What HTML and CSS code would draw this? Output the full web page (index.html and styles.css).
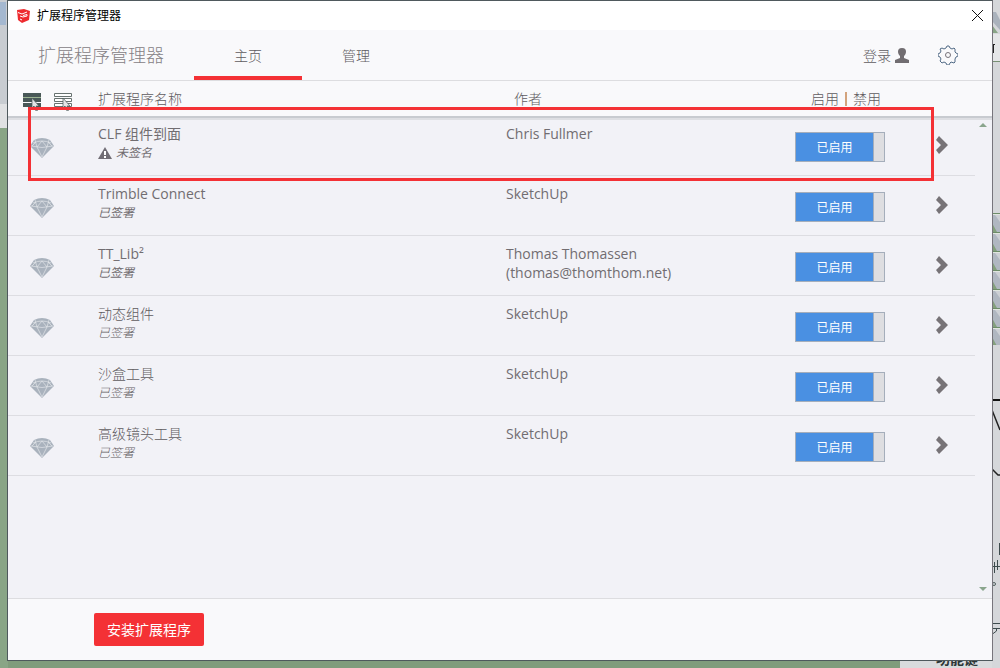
FILE: index.html
```html
<!DOCTYPE html>
<html lang="zh-CN">
<head>
  <meta charset="UTF-8">
  <meta name="viewport" content="width=device-width, initial-scale=1.0">
  <title>扩展程序管理器</title>
  <link rel="stylesheet" href="styles.css">
</head>
<body>

  <!-- Shared icons -->
  <svg class="icon-defs" aria-hidden="true">
    <symbol id="gem" viewBox="0 0 24 20">
      <path fill="#a9b2bd" d="M4 2 Q12 -2 20 2 L24 8 L12 20 L0 8 Z"/>
      <path fill="none" stroke="#e3e5ea" stroke-width=".7" d="M1 8 Q12 11 23 8 M5 2 L7 9 L12 19 L17 9 L19 2 M7 9 L12 3 L17 9 M3 5 Q12 1 21 5 M2 8 L6 4 M22 8 L18 4"/>
    </symbol>
    <symbol id="chevron" viewBox="0 0 13 18">
      <path fill="#777377" d="M1 4 L4 0 L13 9 L4 18 L1 14 L6 9 Z"/>
    </symbol>
  </svg>

  <!-- Desktop behind the window -->
  <svg class="desktop-left" width="8" height="668" aria-hidden="true">
    <path fill="#c8ccd1" d="M0 0h8v128h-8z"/>
    <path fill="#6f9ad0" d="M0 2h6v23h-6z" opacity=".4"/>
    <path fill="#e0e1e3" d="M0 104h7v24h-7z"/>
    <path fill="#89a586" d="M0 128h8v540h-8z"/>
  </svg>
  <svg class="desktop-right" width="8" height="668" aria-hidden="true">
    <defs>
      <pattern id="thumbs" width="8" height="19" y="213" patternUnits="userSpaceOnUse">
        <path fill="#b0b7c1" d="M0 0h8v19h-8z"/>
        <path fill="#cdd0d5" d="M3 2h5v7z"/>
        <path fill="#84a07d" d="M0 10l5 9h-5z"/>
        <path fill="#e0e5df" d="M0 1h8v1h-8z"/>
        <path fill="#6d8d69" d="M0 0h8v1h-8z"/>
      </pattern>
    </defs>
    <path fill="#d5d7da" d="M0 0h8v668h-8z"/>
    <path fill="#aab2bc" d="M0 12h4l4 8v10l-8-9z"/>
    <path fill="#89a586" d="M0 25l6 8h-6z"/>
    <path fill="#e5e6e8" d="M0 34h8v27h-8z"/>
    <path fill="#222" d="M0 44h3v1h-1v8h-1v-4h-1z"/>
    <path fill="#789074" d="M0 61h8v1h-8z"/>
    <path fill="url(#thumbs)" d="M0 213h8v132h-8z"/>
    <path fill="#111" d="M0 399h8v2h-8z"/>
    <path fill="none" stroke="#222" stroke-width="1.500" d="M0 410l8 20M0 469l6 6h2"/>
    <path fill="none" stroke="#3d4b4d" d="M7.500 543v12M2.500 562v11M5.500 560v10M1 566.500h7M0 623.500h8M0 628.500h8M4.500 628v3l-4 3"/>
    <circle cx="2" cy="584" r="1.500" fill="none" stroke="#526060"/>
  </svg>
  <div class="desktop-text" aria-hidden="true">功能键</div>

  <div class="window">
    <div class="titlebar">
      <svg class="app-icon" width="14" height="14" viewBox="0 0 14 14" aria-hidden="true">
        <path fill="#ee2b2f" d="M0 1L7 0l6 2-1 9-7 3-4-3z"/>
        <path fill="none" stroke="#fff" d="M1 3.500l4 1.500 5-2M3 7l3 1 4-1V5.500L6 6.500M3 10l2 1"/>
      </svg>
      <span>扩展程序管理器</span>
      <button class="close-btn" aria-label="关闭">
        <svg width="11" height="11" viewBox="0 0 11 11"><path fill="none" stroke="#111" d="M0 0l11 11M11 0L0 11"/></svg>
      </button>
    </div>

    <div class="navbar">
      <h1>扩展程序管理器</h1>
      <nav>
        <a href="#" class="active">主页</a>
        <a href="#">管理</a>
      </nav>
      <a href="#" class="login">登录
        <svg width="14" height="15" viewBox="0 0 14 15" aria-hidden="true"><path fill="#716d71" d="M7 0c6 0 4 7 2 8v2l5 2v3H0v-3l5-2V8C3 7 1 0 7 0z"/></svg>
      </a>
      <button class="settings" aria-label="设置">
        <svg width="20" height="20" viewBox="0 0 20 20">
          <path fill="none" stroke="#526b86" d="M8 3l1-2h2l1 2 2 1 2-1 1 1 0 3 1 1 2 1v2l-2 1-1 2 0 3-1 1-3-1-1 1-1 2H9l-1-2-2-1-2 1-2-2 1-2-1-2-2-1V9l2-1 1-2-1-2 2-1 2 1z"/>
          <circle cx="10" cy="10" r="2.500" fill="none" stroke="#77737a"/>
        </svg>
      </button>
    </div>

    <div class="list">
      <table>
        <colgroup>
          <col class="col-icon"><col class="col-name"><col><col class="col-toggle"><col class="col-more"><col class="col-gutter">
        </colgroup>
        <thead>
          <tr>
            <th class="select-cell">
              <button aria-label="全选">
                <svg width="20" height="18" viewBox="0 0 20 18">
                  <path fill="#495857" d="M0 0h18v4H0zM0 5h18v4H0zM0 10h18v4H0z"/>
                  <path fill="#9bb392" d="M0 4h18v1H0z"/>
                  <path fill="#e4e6e6" stroke="#495857" stroke-width=".7" d="M9 5v10l2-2 2 5 2-1-2-4h3z"/>
                </svg>
              </button>
              <button aria-label="取消全选">
                <svg width="20" height="18" viewBox="0 0 20 18">
                  <path fill="#fff" stroke="#687270" d="M.5.5h17v3H.5zM.5 5.500h17v3H.5zM.5 10.500h17v3H.5z"/>
                  <path fill="#e4e6e6" stroke="#495857" stroke-width=".7" d="M9 5v10l2-2 2 5 2-1-2-4h3z"/>
                </svg>
              </button>
            </th>
            <th>扩展程序名称</th>
            <th class="author-head">作者</th>
            <th class="toggle-head">启用<i></i>禁用</th>
            <th></th>
            <th></th>
          </tr>
        </thead>
        <tbody>
          <tr>
            <td class="gem"><svg width="24" height="20"><use href="#gem"/></svg></td>
            <td>CLF 组件到面
              <div class="signed unsigned">
                <svg width="14" height="12" viewBox="0 0 14 12" aria-hidden="true"><path fill="#716d75" d="M7 0l7 12H0z"/><path stroke="#fff" stroke-width="2" d="M7 4v4M7 9v2"/></svg>
                <em>未签名</em>
              </div>
            </td>
            <td>Chris Fullmer</td>
            <td><button class="toggle" aria-pressed="true"><span>已启用</span></button></td>
            <td class="more"><button aria-label="详情"><svg width="13" height="18"><use href="#chevron"/></svg></button></td>
            <td class="gutter"></td>
          </tr>
          <tr>
            <td class="gem"><svg width="24" height="20"><use href="#gem"/></svg></td>
            <td>Trimble Connect<div class="signed"><em>已签署</em></div></td>
            <td>SketchUp</td>
            <td><button class="toggle" aria-pressed="true"><span>已启用</span></button></td>
            <td class="more"><button aria-label="详情"><svg width="13" height="18"><use href="#chevron"/></svg></button></td>
            <td class="gutter"></td>
          </tr>
          <tr>
            <td class="gem"><svg width="24" height="20"><use href="#gem"/></svg></td>
            <td>TT_Lib²<div class="signed"><em>已签署</em></div></td>
            <td>Thomas Thomassen<br>(thomas@thomthom.net)</td>
            <td><button class="toggle" aria-pressed="true"><span>已启用</span></button></td>
            <td class="more"><button aria-label="详情"><svg width="13" height="18"><use href="#chevron"/></svg></button></td>
            <td class="gutter"></td>
          </tr>
          <tr>
            <td class="gem"><svg width="24" height="20"><use href="#gem"/></svg></td>
            <td class="light">动态组件<div class="signed"><em>已签署</em></div></td>
            <td>SketchUp</td>
            <td><button class="toggle" aria-pressed="true"><span>已启用</span></button></td>
            <td class="more"><button aria-label="详情"><svg width="13" height="18"><use href="#chevron"/></svg></button></td>
            <td class="gutter"></td>
          </tr>
          <tr>
            <td class="gem"><svg width="24" height="20"><use href="#gem"/></svg></td>
            <td class="light">沙盒工具<div class="signed"><em>已签署</em></div></td>
            <td>SketchUp</td>
            <td><button class="toggle" aria-pressed="true"><span>已启用</span></button></td>
            <td class="more"><button aria-label="详情"><svg width="13" height="18"><use href="#chevron"/></svg></button></td>
            <td class="gutter"></td>
          </tr>
          <tr>
            <td class="gem"><svg width="24" height="20"><use href="#gem"/></svg></td>
            <td class="light">高级镜头工具<div class="signed"><em>已签署</em></div></td>
            <td>SketchUp</td>
            <td><button class="toggle" aria-pressed="true"><span>已启用</span></button></td>
            <td class="more"><button aria-label="详情"><svg width="13" height="18"><use href="#chevron"/></svg></button></td>
            <td class="gutter"></td>
          </tr>
        </tbody>
      </table>
      <svg class="scroll-up" width="8" height="4" viewBox="0 0 8 4" aria-hidden="true"><path fill="#8aa58d" d="M4 0l4 4H0z"/></svg>
      <svg class="scroll-down" width="8" height="4" viewBox="0 0 8 4" aria-hidden="true"><path fill="#8aa58d" d="M0 0h8L4 4z"/></svg>
      <div class="highlight"></div>
    </div>

    <footer>
      <button class="install">安装扩展程序</button>
    </footer>
  </div>

</body>
</html>
```
FILE: styles.css
```css
* { box-sizing: border-box; }
body {
  margin: 0;
  min-height: 100vh;
  padding: 0 7px 7px;
  display: flex;
  background: linear-gradient(to right, #809c7c 90%, #d9dbdd 90%);
  font-family: "Open Sans", "Noto Sans CJK SC", sans-serif;
  font-size: 14px;
  line-height: 19px;
  color: #716d71;
  position: relative;
}
button {
  font: inherit;
  color: inherit;
  background: none;
  border: none;
  padding: 0;
  cursor: pointer;
}
a {
  color: inherit;
  text-decoration: none;
}
svg { display: block; }
.icon-defs {
  position: absolute;
  width: 0;
  height: 0;
}
.desktop-left, .desktop-right {
  position: absolute;
  top: 0;
}
.desktop-left { left: 0; }
.desktop-right { right: 0; }
.desktop-text {
  position: absolute;
  right: 22px;
  bottom: 0;
  font-size: 14px;
  font-weight: bold;
  color: #2c3636;
}
.window {
  flex: 1;
  display: flex;
  flex-direction: column;
  border: 1px solid #4f595d;
  border-right-color: #77757c;
  background: #f9f9fb;
  position: relative;
}

/* Title bar and navigation */
.titlebar {
  height: 29px;
  display: flex;
  align-items: center;
  gap: 6px;
  padding: 0 9px;
  background: #fff;
  color: #000;
  font-size: 12px;
}
.close-btn { margin-left: auto; }
.navbar {
  height: 51px;
  display: flex;
  align-items: center;
  border-bottom: 1px solid #dddde0;
  padding: 0 34px 0 30px;
  font-weight: 300;
}
h1 {
  margin: 0;
  font-size: 18px;
  font-weight: 300;
  line-height: 24px;
  color: #858185;
}
nav {
  display: flex;
  align-self: stretch;
  margin-left: 30px;
}
nav a {
  width: 108px;
  display: flex;
  align-items: center;
  justify-content: center;
  border-top: 4px solid transparent;
  border-bottom: 4px solid transparent;
}
nav a.active { border-bottom-color: #f43135; }
nav a, .login, th { color: #5f5b5f; }
.login {
  display: flex;
  align-items: center;
  gap: 4px;
  margin-left: auto;
}
.settings { margin-left: 29px; }

/* Extension list */
.list {
  flex: 1;
  position: relative;
  background: #f2f2f7;
}
table {
  width: 100%;
  table-layout: fixed;
  border-collapse: separate;
  border-spacing: 0;
}
.col-icon { width: 90px; }
.col-name { width: 408px; }
.col-toggle { width: 140px; }
.col-more { width: 40px; }
.col-gutter { width: 17px; }
th {
  height: 35px;
  padding: 0;
  background: #f9f9fb;
  text-align: left;
  font-weight: 300;
}
td {
  height: 60px;
  padding: 8px 0 0;
  vertical-align: top;
  border-bottom: 1px solid #dddde2;
}
td.gutter { border-bottom: none; }
td.light {
  font-weight: 300;
  color: #5f5b5f;
}
tbody tr:first-child td {
  box-shadow: inset 0 2px #c8cbd0, inset 0 4px #dedfe3;
}
.select-cell { padding: 6px 0 0 15px; }
.select-cell button {
  float: left;
  margin-right: 11px;
}
th.author-head { padding-left: 8px; }
th.toggle-head { padding-left: 16px; }
.toggle-head i {
  display: inline-block;
  width: 2px;
  height: 14px;
  margin: 0 6px;
  background: #d3a37c;
  vertical-align: -2px;
}
td.gem { padding: 22px 0 0 22px; }
.signed {
  display: flex;
  align-items: center;
  gap: 4px;
  line-height: 20px;
  font-size: 12px;
}
.toggle {
  display: block;
  width: 90px;
  height: 30px;
  margin-top: 8px;
  padding-right: 10px;
  background: #dedee1;
  border: 1px solid #a5aebb;
  font-size: 12px;
  color: #fff;
}
.toggle span {
  display: block;
  height: 28px;
  line-height: 30px;
  background: #4a90e2;
  border-right: 1px solid #a5aebb;
}
td.more { padding: 20px 0 0; }
.scroll-up, .scroll-down {
  position: absolute;
  right: 5px;
}
.scroll-up { top: 42px; }
.scroll-down { bottom: 7px; }
/* red frame round the unsigned extension */
.highlight {
  position: absolute;
  top: 26px;
  left: 20px;
  right: 58px;
  height: 74px;
  border: 3px solid #f43135;
  pointer-events: none;
}

footer {
  height: 62px;
  display: flex;
  align-items: center;
  padding-left: 86px;
  border-top: 1px solid #dddde0;
}
.install {
  width: 110px;
  height: 33px;
  border-radius: 2px;
  background: #f43135;
  color: #fff;
}
```
